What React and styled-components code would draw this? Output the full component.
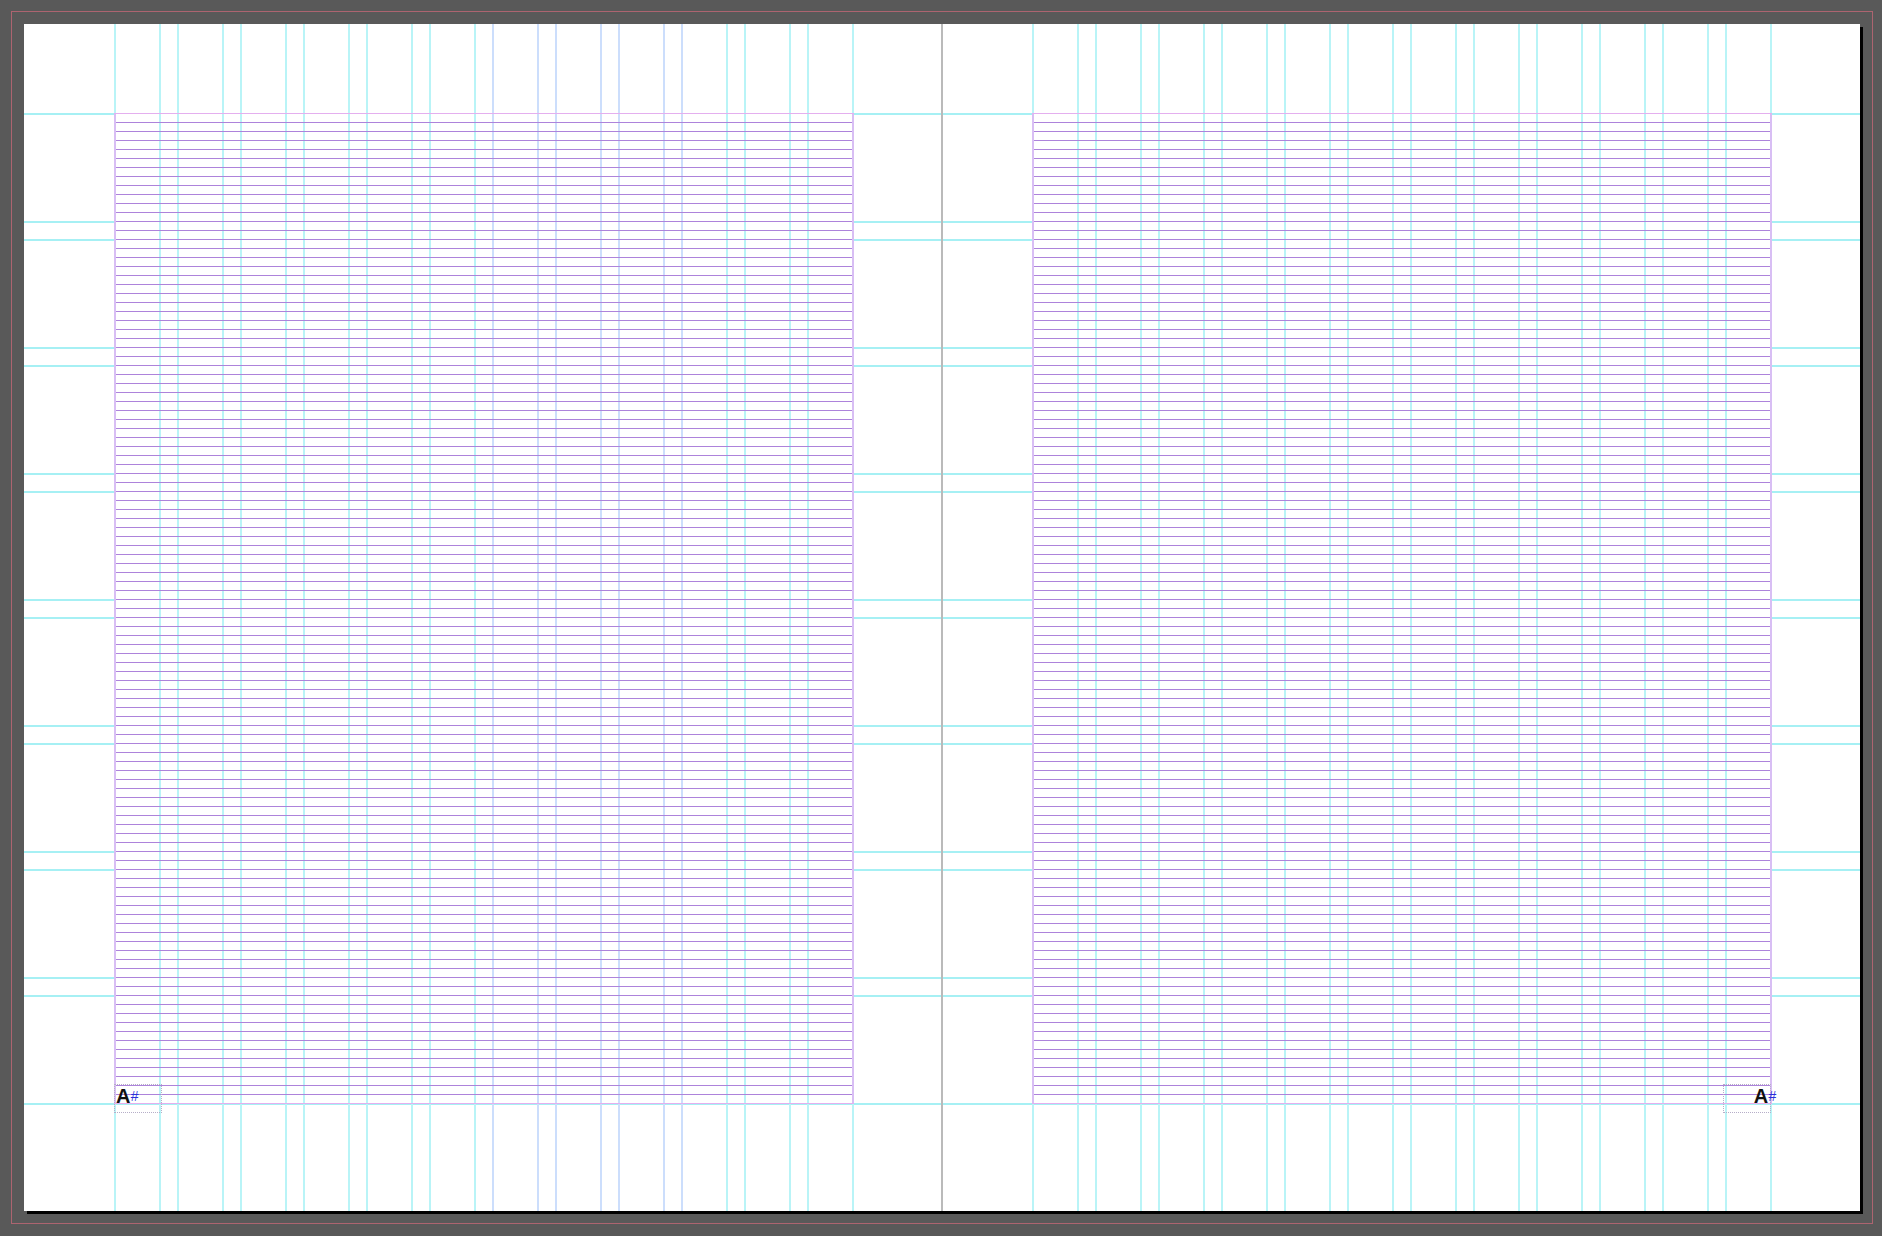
import React from 'react'
import styled, { createGlobalStyle, css } from 'styled-components'

// spread geometry, in px
const PAGE_W = 918
const PAGE_H = 1187
const TOP = 89
const INSIDE = 90
const COL = 45
const GUTTER = 18
const COLS = 12
const ROW = 108
const ROWS = 8
const LEADING = 9

const CYAN = '#a6f0f4'
const CYAN_SOFT = '#b9f4f7'
const BLUE = '#ccdefc'
const BASELINE = '#ad83db'
const MARGIN_H = '#e4afef'
const MARGIN_V = '#d8bef4'
const SPINE = '#bababa'

const GlobalStyle = createGlobalStyle`
  html, body {
    margin: 0;
    padding: 0;
    background: #595959;
  }
  body {
    font-family: "Liberation Sans", Arial, sans-serif;
  }
`

// a pair of guides (start and end of a track) repeated every track + gutter
const track = (dir, color, size, rule) => `repeating-linear-gradient(${dir},
  ${color} 0 ${rule}px,
  transparent ${rule}px ${size}px,
  ${color} ${size}px ${size + rule}px,
  transparent ${size + rule}px ${size + GUTTER}px)`

const rowGuides = css`
  background-image:
    linear-gradient(${SPINE}, ${SPINE}),
    ${track('to bottom', CYAN, ROW, 2)};
  background-size:
    2px 100%,
    100% ${ROWS * (ROW + GUTTER)}px;
  background-position:
    ${PAGE_W - 1}px 0,
    0 ${TOP}px;
  background-repeat: no-repeat;
`

// column layers starting at x; accent = [first column, count] drawn in blue
const columnLayers = (x, accent) => {
  const period = COL + GUTTER
  const out = []
  if (accent) {
    const [first, count] = accent
    out.push({
      image: track('to right', BLUE, COL, 2),
      size: `${count * period + 2}px 100%`,
      spot: `${x + first * period}px 0`,
    })
  }
  out.push({
    image: track('to right', CYAN_SOFT, COL, 2),
    size: `${COLS * period}px 100%`,
    spot: `${x}px 0`,
  })
  return out
}

const paint = (layers) => css`
  background-image: ${layers.map(l => l.image).join(', ')};
  background-size: ${layers.map(l => l.size).join(', ')};
  background-position: ${layers.map(l => l.spot).join(', ')};
  background-repeat: no-repeat;
`

const baseline = {
  image: `repeating-linear-gradient(to bottom, ${BASELINE} 0 1px, transparent 1px ${LEADING}px)`,
  size: '100% 100%',
  spot: '0 0',
}

const Pasteboard = styled.div`
  width: 1882px;
  min-height: 1236px;
  box-sizing: border-box;
  padding: 11px;
`

const Bleed = styled.div`
  display: flex;
  width: fit-content;
  border: 1px solid #ad6470;
  padding: 12px;
`

const Spread = styled.div`
  display: flex;
  width: ${PAGE_W * 2}px;
  height: ${PAGE_H}px;
  background-color: #fff;
  box-shadow: 3px 3px 0 #000;
  ${rowGuides}
`

const Page = styled.div`
  flex: none;
  display: flex;
  width: ${PAGE_W}px;
  height: ${PAGE_H}px;
  box-sizing: border-box;
  padding: ${TOP}px 88px 107px ${INSIDE}px;
  ${p => paint(columnLayers(INSIDE, p.$accent))}
`

// the margin box: white, so row guides stay hidden under the baseline grid
const TextArea = styled.div`
  flex: 1;
  position: relative;
  background-color: #fff;
  ${p => paint([baseline, ...columnLayers(0, p.$accent)])}
  box-shadow:
    inset 0 1px 0 ${MARGIN_H},
    inset 0 -1px 0 ${MARGIN_H},
    inset 2px 0 0 ${MARGIN_V},
    inset -2px 0 0 ${MARGIN_V};
`

const Folio = styled.div`
  position: absolute;
  top: 971px;
  ${p => p.$side === 'right' ? 'right: 1px;' : 'left: 0;'}
  width: 48px;
  height: 29px;
  box-sizing: border-box;
  border: 1px dotted #b6aec8;
  padding-top: 1px;
  padding-left: 1px;
  text-align: ${p => p.$side === 'right' ? 'right' : 'left'};
  font: 700 20px/20px "Liberation Sans", Arial, sans-serif;
  color: #111;
  white-space: nowrap;
`

const Marker = styled.span`
  position: relative;
  top: -2px;
  font-size: 14px;
  font-weight: 400;
  font-style: italic;
  color: #2b30d9;
  margin-right: ${p => p.$side === 'right' ? '-6px' : '0'};
`

const App = () => {
  return (
    <Pasteboard>
      <GlobalStyle />
      <Bleed>
        <Spread>
          <Page $accent={[6, 3]}>
            <TextArea $accent={[6, 3]}>
              <Folio>A<Marker>#</Marker></Folio>
            </TextArea>
          </Page>
          <Page>
            <TextArea>
              <Folio $side="right">A<Marker $side="right">#</Marker></Folio>
            </TextArea>
          </Page>
        </Spread>
      </Bleed>
    </Pasteboard>
  )
}

export default App
